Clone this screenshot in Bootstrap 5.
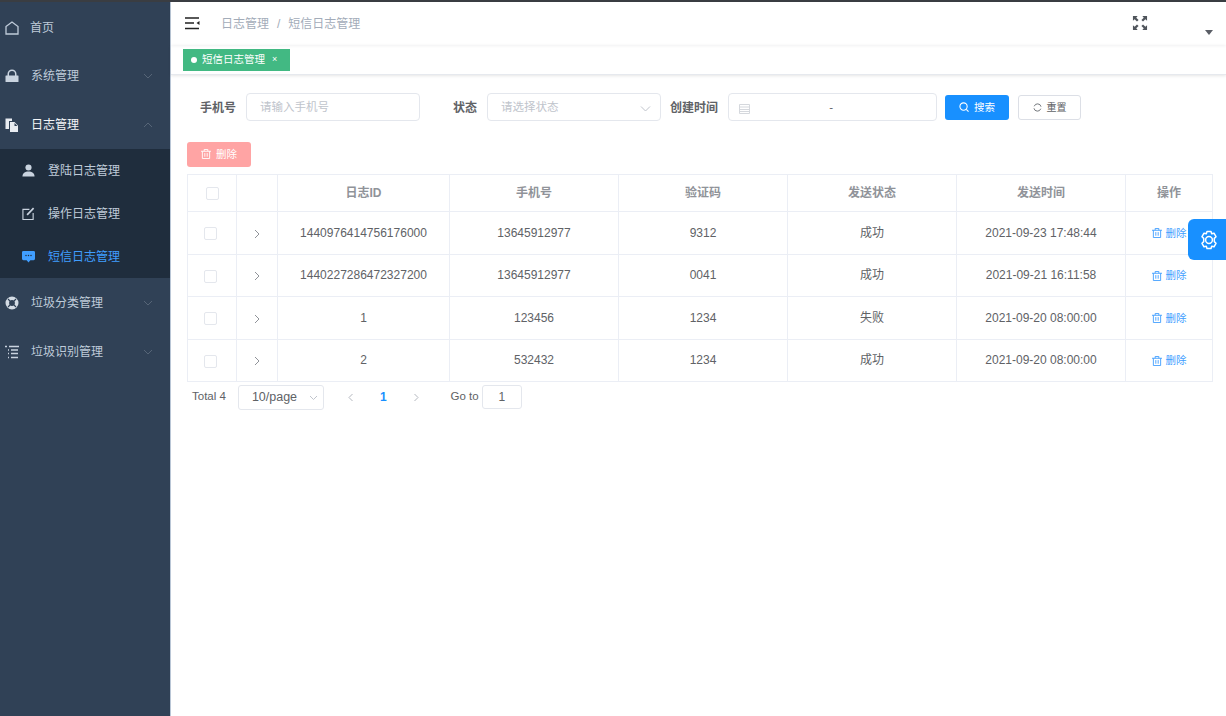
<!DOCTYPE html>
<html lang="zh">
<head>
    <meta charset="UTF-8">
    <title>短信日志管理</title>
    <meta name="viewport" content="width=device-width, initial-scale=1">
    <link href="https://cdn.jsdelivr.net/npm/bootstrap@5.3.2/dist/css/bootstrap.min.css" rel="stylesheet">
    <style>
        html, body { height: 100%; }
        body {
            font-family: "Liberation Sans", "Noto Sans CJK SC", sans-serif;
            font-size: 12px;
            color: #606266;
            background: #fff;
            overflow: hidden;
        }
        .app-shell { height: 716px; border-top: 2px solid #3a3d42; }
        .side-menu { width: 171px; flex: none; background: #304156; border-right: 1px solid #b9c6d6; color: #bfcbd9; }
        .menu-item { height: 49px; padding-left: 5px; padding-right: 17px; }
        .menu-item .menu-ico { width: 14px; height: 14px; flex: none; margin-right: 12px; }
        .menu-item .menu-arrow { width: 10px; height: 10px; margin-left: auto; }
        .menu-item.is-open { color: #f4f6f8; }
        .menu-first { padding-top: 2px; }
        .menu-first .menu-ico { width: 14px; height: 14px; margin-right: 11px; }
        .sub-menu { background: #1f2d3d; height: 129px; }
        .sub-item { height: 43px; padding-left: 22px; }
        .sub-item svg { width: 13px; height: 13px; flex: none; margin-right: 13px; }
        .sub-item.is-active { color: #409eff; }
        .main-pane { min-width: 0; }
        .top-bar { height: 43px; padding-left: 14px; box-shadow: 0 1px 3px rgba(0,21,41,.06); }
        .crumb { color: #a3acb9; margin-left: 21px; margin-top: 1px; font-size: 12px; }
        .crumb i { font-style: normal; margin: 0 8px; }
        .screen-ico { width: 16px; height: 16px; margin-left: auto; margin-right: 57px; margin-top: -2px; }
        .caret-ico { width: 0; height: 0; border: 4px solid transparent; border-top: 5px solid #5a5e66; border-bottom: 0; margin-right: 13px; margin-top: 18px; }
        .tag-bar { height: 30px; padding: 4px 0 0 12px; border-bottom: 1px solid #e6e9ee; box-shadow: 0 1px 3px rgba(0,0,0,.1); }
        .tag-item { width: 107px; height: 22px; background: #42b983; border: 1px solid #42b983; color: #fff; font-size: 10.5px; padding-left: 7px; }
        .tag-item b { width: 6px; height: 6px; border-radius: 50%; background: #fff; margin-right: 5px; }
        .tag-item span { margin-left: 7px; font-size: 9px; }
        .page-body { padding: 0 14px 0 16px; }
        .search-row { height: 27px; margin-top: 19px; }
        .field-label { font-weight: 700; color: #606266; font-size: 12px; white-space: nowrap; }
        .fake-input { height: 28px; margin-top: -1px; padding-top: 2px; border: 1px solid #e4e7ed; border-radius: 4px; color: #c0c4cc; font-size: 11.5px; padding-left: 13px; }
        .input-phone { width: 174px; margin-left: 10px; }
        .input-state { width: 174px; margin-left: 10px; padding-right: 9px; }
        .input-date { width: 209px; margin-left: 10px; padding-left: 10px; color: #606266; }
        .input-date svg { flex: none; }
        .date-dash { flex-grow: 1; text-align: center; padding-right: 24px; }
        .label-phone { margin-left: 13px; }
        .label-state { margin-left: 33px; }
        .label-time { margin-left: 9px; }
        .btn-find { width: 64px; height: 25px; background: #1890ff; color: #fff; border: 0; border-radius: 3px; font-size: 10.5px; margin-left: 8px; padding: 0; }
        .btn-reset { width: 63px; height: 25px; background: #fff; color: #606266; border: 1px solid #dcdfe6; border-radius: 3px; font-size: 10px; margin-left: 9px; padding: 0; }
        .btn-remove { width: 64px; height: 25px; background: #ffa4a4; color: #fff; border: 0; border-radius: 3px; font-size: 10.5px; padding: 0; margin-top: 21px; }
        .btn-find svg, .btn-remove svg { width: 10px; height: 10px; margin-right: 5px; vertical-align: -1.5px; }
        .btn-reset svg { width: 9px; height: 9px; margin-right: 5px; vertical-align: -1px; }
        .log-table { width: 1025px; table-layout: fixed; margin: 7px 0 0 0; border-color: #ebeef5; font-size: 12px; color: #606266; }
        .log-table th, .log-table td { text-align: center; vertical-align: middle; padding: 0; border-color: #ebeef5; color: #606266; }
        .log-table th { height: 37px; color: #909399; font-weight: 700; font-size: 12px; }
        .log-table td { height: 42.5px; }
        .box-tick { display: inline-block; width: 13px; height: 13px; border: 1px solid #e4e7ed; border-radius: 2px; vertical-align: middle; }
        .log-table td .box-tick { margin-right: 3px; }
        .row-arrow { width: 10px; height: 10px; }
        .del-link { color: #409eff; font-size: 10.5px; white-space: nowrap; }
        .del-link svg { width: 10px; height: 10px; margin-right: 4px; vertical-align: -1.5px; }
        .pager { height: 30px; padding-left: 5px; color: #606266; font-size: 11.5px; }
        .page-size { width: 86px; height: 25px; border: 1px solid #e4e7ed; border-radius: 3px; margin-left: 12px; padding: 0 5px 0 13px; font-size: 12.5px; }
        .pager-arrow { width: 9px; height: 9px; }
        .arrow-prev { margin-left: 22px; }
        .page-now { color: #1890ff; font-weight: 700; margin: 0 25px; font-size: 12px; }
        .goto-text { margin-left: 30px; }
        .page-jump { width: 40px; height: 24px; border: 1px solid #e4e7ed; border-radius: 3px; margin-left: 3px; font-size: 12px; }
        .setting-tab { position: absolute; top: 217px; right: 0; width: 38px; height: 41px; background: #1890ff; border-radius: 6px 0 0 6px; }
        .setting-tab svg { width: 20px; height: 20px; margin-left: 4px; }
    </style>
</head>
<body>
<div class="app-shell d-flex position-relative">

    <!-- sidebar -->
    <aside class="side-menu">
        <div class="menu-item menu-first d-flex align-items-center">
            <svg class="menu-ico" viewBox="0 0 14 14" fill="none" stroke="#bfcbd9" stroke-width="1.3"><path d="M1 5.5 7 1l6 4.500V13H1z"/></svg>
            <span>首页</span>
        </div>
        <div class="menu-item d-flex align-items-center">
            <svg class="menu-ico" viewBox="0 0 14 14" fill="#c9d3df"><path d="M1 6.500h12a.5.5 0 0 1 .5.5v5.500a.5.5 0 0 1-.5.5H1a.5.5 0 0 1-.5-.5V7a.5.5 0 0 1 .5-.5z"/><path d="M2.500 7V5a4.500 4.500 0 0 1 9 0v2H10V5a3 3 0 0 0-6 0v2z"/></svg>
            <span>系统管理</span>
            <svg class="menu-arrow" viewBox="0 0 10 10" fill="none" stroke="#566577"><path d="M1 3l4 4 4-4"/></svg>
        </div>
        <div class="menu-item is-open d-flex align-items-center">
            <svg class="menu-ico" viewBox="0 0 14 14" fill="#e8ecf1"><path d="M.5.5h6.500v2.500H4v8H.5z"/><path d="M5 4h4.500L13 7.500V14H5zm4.500 1V8H12.500z" fill-rule="evenodd"/></svg>
            <span>日志管理</span>
            <svg class="menu-arrow" viewBox="0 0 10 10" fill="none" stroke="#566577"><path d="M1 7l4-4 4 4"/></svg>
        </div>
        <div class="sub-menu">
            <div class="sub-item d-flex align-items-center">
                <svg viewBox="0 0 14 14" fill="#c9d3df"><circle cx="7" cy="3.800" r="3.300"/><path d="M.5 13.500c0-3.800 2.700-5.500 6.500-5.500s6.500 1.700 6.500 5.500z"/></svg>
                <span>登陆日志管理</span>
            </div>
            <div class="sub-item d-flex align-items-center">
                <svg viewBox="0 0 14 14" fill="none" stroke="#c9d3df" stroke-width="1.2"><path d="M8 2.500H1v11h11V6.500"/><path d="M5.500 8.500 12.500 1.200" stroke-width="1.800"/></svg>
                <span>操作日志管理</span>
            </div>
            <div class="sub-item is-active d-flex align-items-center">
                <svg viewBox="0 0 14 14" fill="#409eff"><path d="M1.500 1h11a1.500 1.500 0 0 1 1.500 1.500v7a1.500 1.500 0 0 1-1.500 1.500H9L7 13.500 5 11H1.500A1.500 1.500 0 0 1 0 9.500v-7A1.500 1.500 0 0 1 1.500 1z"/><g fill="#1f2d3d"><circle cx="4.300" cy="6" r=".8"/><circle cx="7" cy="6" r=".8"/><circle cx="9.700" cy="6" r=".8"/></g></svg>
                <span>短信日志管理</span>
            </div>
        </div>
        <div class="menu-item d-flex align-items-center">
            <svg class="menu-ico" viewBox="0 0 14 14" fill="none"><circle cx="7" cy="7" r="4.700" stroke="#d3dbe4" stroke-width="3.600"/><path d="M3 3 5 5M11 3 9 5M3 11l2-2M11 11 9 9" stroke="#304156" stroke-width="1.100"/></svg>
            <span>垃圾分类管理</span>
            <svg class="menu-arrow" viewBox="0 0 10 10" fill="none" stroke="#566577"><path d="M1 3l4 4 4-4"/></svg>
        </div>
        <div class="menu-item d-flex align-items-center">
            <svg class="menu-ico" viewBox="0 0 14 14" fill="none" stroke="#c9d3df" stroke-width="1.3"><path d="M0 1.500h2M4 1.500h10M3 5h1M6 5h7M3 8.500h1M6 8.500h7M3 12.500h1M6 12.500h7"/></svg>
            <span>垃圾识别管理</span>
            <svg class="menu-arrow" viewBox="0 0 10 10" fill="none" stroke="#566577"><path d="M1 3l4 4 4-4"/></svg>
        </div>
    </aside>

    <main class="main-pane flex-grow-1">
        <div class="top-bar d-flex align-items-center">
            <svg width="15" height="13" viewBox="0 0 15 13" fill="none" stroke="#222" stroke-width="1.4"><path d="M0 1h14M0 6h9M0 11.500h14"/><path d="M14.500 4v4L11.500 6z" fill="#222" stroke="none"/></svg>
            <div class="crumb">日志管理<i>/</i>短信日志管理</div>
            <svg class="screen-ico" viewBox="0 0 17 17" fill="#50555c"><path d="M1 1h5L4.500 2.800 7 5.300 5.300 7 2.800 4.500 1 6z"/><path d="M16 1v5l-1.800-1.500L11.700 7 10 5.300l2.500-2.500L11 1z"/><path d="M1 16v-5l1.800 1.500L5.300 10 7 11.700l-2.500 2.500L6 16z"/><path d="M16 16h-5l1.500-1.800L10 11.700 11.700 10l2.500 2.500L16 11z"/></svg>
            <div class="caret-ico"></div>
        </div>
        <div class="tag-bar">
            <div class="tag-item d-flex align-items-center"><b></b>短信日志管理<span>×</span></div>
        </div>

        <div class="page-body">
            <div class="search-row d-flex align-items-center">
                <label class="field-label label-phone">手机号</label>
                <div class="fake-input input-phone d-flex align-items-center">请输入手机号</div>
                <label class="field-label label-state">状态</label>
                <div class="fake-input input-state d-flex align-items-center justify-content-between">
                    请选择状态
                    <svg width="11" height="11" viewBox="0 0 11 11" fill="none" stroke="#c0c4cc"><path d="M1 3.500l4.500 4.500L10 3.500"/></svg>
                </div>
                <label class="field-label label-time">创建时间</label>
                <div class="fake-input input-date d-flex align-items-center">
                    <svg width="11" height="11" viewBox="0 0 11 11" fill="none" stroke="#d5d8dd"><path d="M.5 1.500h10v9H.5zM.5 4h10M.5 6.500h10M.5 8.500h10"/></svg>
                    <span class="date-dash">-</span>
                </div>
                <button class="btn btn-find">
                    <svg viewBox="0 0 11 11" fill="none" stroke="#fff" stroke-width="1.2"><circle cx="5" cy="5" r="4"/><path d="M8 8l2.500 2.500"/></svg>搜索
                </button>
                <button class="btn btn-reset">
                    <svg viewBox="0 0 11 11" fill="none" stroke="#707479" stroke-width="1.2"><path d="M1.200 6.500A4.300 4.300 0 0 0 9.500 7M9.800 4.500A4.300 4.300 0 0 0 1.500 4"/></svg>重置
                </button>
            </div>

            <button class="btn btn-remove d-block">
                <svg viewBox="0 0 11 11" fill="none" stroke="#fff"><path d="M0 2.500h11M3.500 2.500V.5h4v2M1.500 2.500v8h8v-8M4.200 4.500v4M6.800 4.500v4"/></svg>删除
            </button>

            <table class="table table-bordered log-table">
                <colgroup>
                    <col style="width:49px"><col style="width:41px"><col style="width:172px"><col style="width:169px">
                    <col style="width:169px"><col style="width:169px"><col style="width:169px"><col style="width:87px">
                </colgroup>
                <thead>
                    <tr>
                        <th><span class="box-tick"></span></th>
                        <th></th>
                        <th>日志ID</th>
                        <th>手机号</th>
                        <th>验证码</th>
                        <th>发送状态</th>
                        <th>发送时间</th>
                        <th>操作</th>
                    </tr>
                </thead>
                <tbody id="logRows"></tbody>
            </table>

            <div class="pager d-flex align-items-center">
                <span>Total 4</span>
                <div class="page-size d-flex align-items-center justify-content-between">
                    10/page
                    <svg width="9" height="9" viewBox="0 0 9 9" fill="none" stroke="#c0c4cc"><path d="M1 3l3.500 3.500L8 3"/></svg>
                </div>
                <svg class="pager-arrow arrow-prev" viewBox="0 0 9 9" fill="none" stroke="#b4b8bf"><path d="M6.500 1 3 4.500 6.500 8"/></svg>
                <span class="page-now">1</span>
                <svg class="pager-arrow" viewBox="0 0 9 9" fill="none" stroke="#b4b8bf"><path d="M2.500 1 6 4.500 2.500 8"/></svg>
                <span class="goto-text">Go to</span>
                <div class="page-jump d-flex align-items-center justify-content-center">1</div>
            </div>
        </div>
    </main>

    <div class="setting-tab d-flex align-items-center justify-content-center">
        <svg viewBox="0 0 20 20" fill="none" stroke="#fff" stroke-width="1.5" stroke-linejoin="round"><path d="M8 1.500h4l.7 2.300 2.300-.6 2 3.500-1.700 1.700v3.200l1.700 1.700-2 3.500-2.300-.6-.7 2.300H8l-.7-2.300-2.300.6-2-3.500 1.700-1.700V8.400L3 6.700l2-3.500 2.300.6z"/><circle cx="10" cy="10" r="3.400"/></svg>
    </div>
</div>

<script src="https://cdn.jsdelivr.net/npm/bootstrap@5.3.2/dist/js/bootstrap.bundle.min.js"></script>
<script>
    const rows = [
        ["1440976414756176000", "13645912977", "9312", "成功", "2021-09-23 17:48:44"],
        ["1440227286472327200", "13645912977", "0041", "成功", "2021-09-21 16:11:58"],
        ["1", "123456", "1234", "失败", "2021-09-20 08:00:00"],
        ["2", "532432", "1234", "成功", "2021-09-20 08:00:00"]
    ];
    const trash = '<svg viewBox="0 0 11 11" fill="none" stroke="#409eff"><path d="M0 2.500h11M3.500 2.500V.5h4v2M1.500 2.500v8h8v-8M4.200 4.500v4M6.800 4.500v4"/></svg>';
    const arrow = '<svg class="row-arrow" viewBox="0 0 10 10" fill="none" stroke="#909399"><path d="M3 1l4 4-4 4"/></svg>';
    document.getElementById("logRows").innerHTML = rows.map(r => `
        <tr>
            <td><span class="box-tick"></span></td>
            <td>${arrow}</td>
            ${r.map(c => `<td>${c}</td>`).join("")}
            <td><span class="del-link">${trash}删除</span></td>
        </tr>`).join("");
</script>
</body>
</html>
